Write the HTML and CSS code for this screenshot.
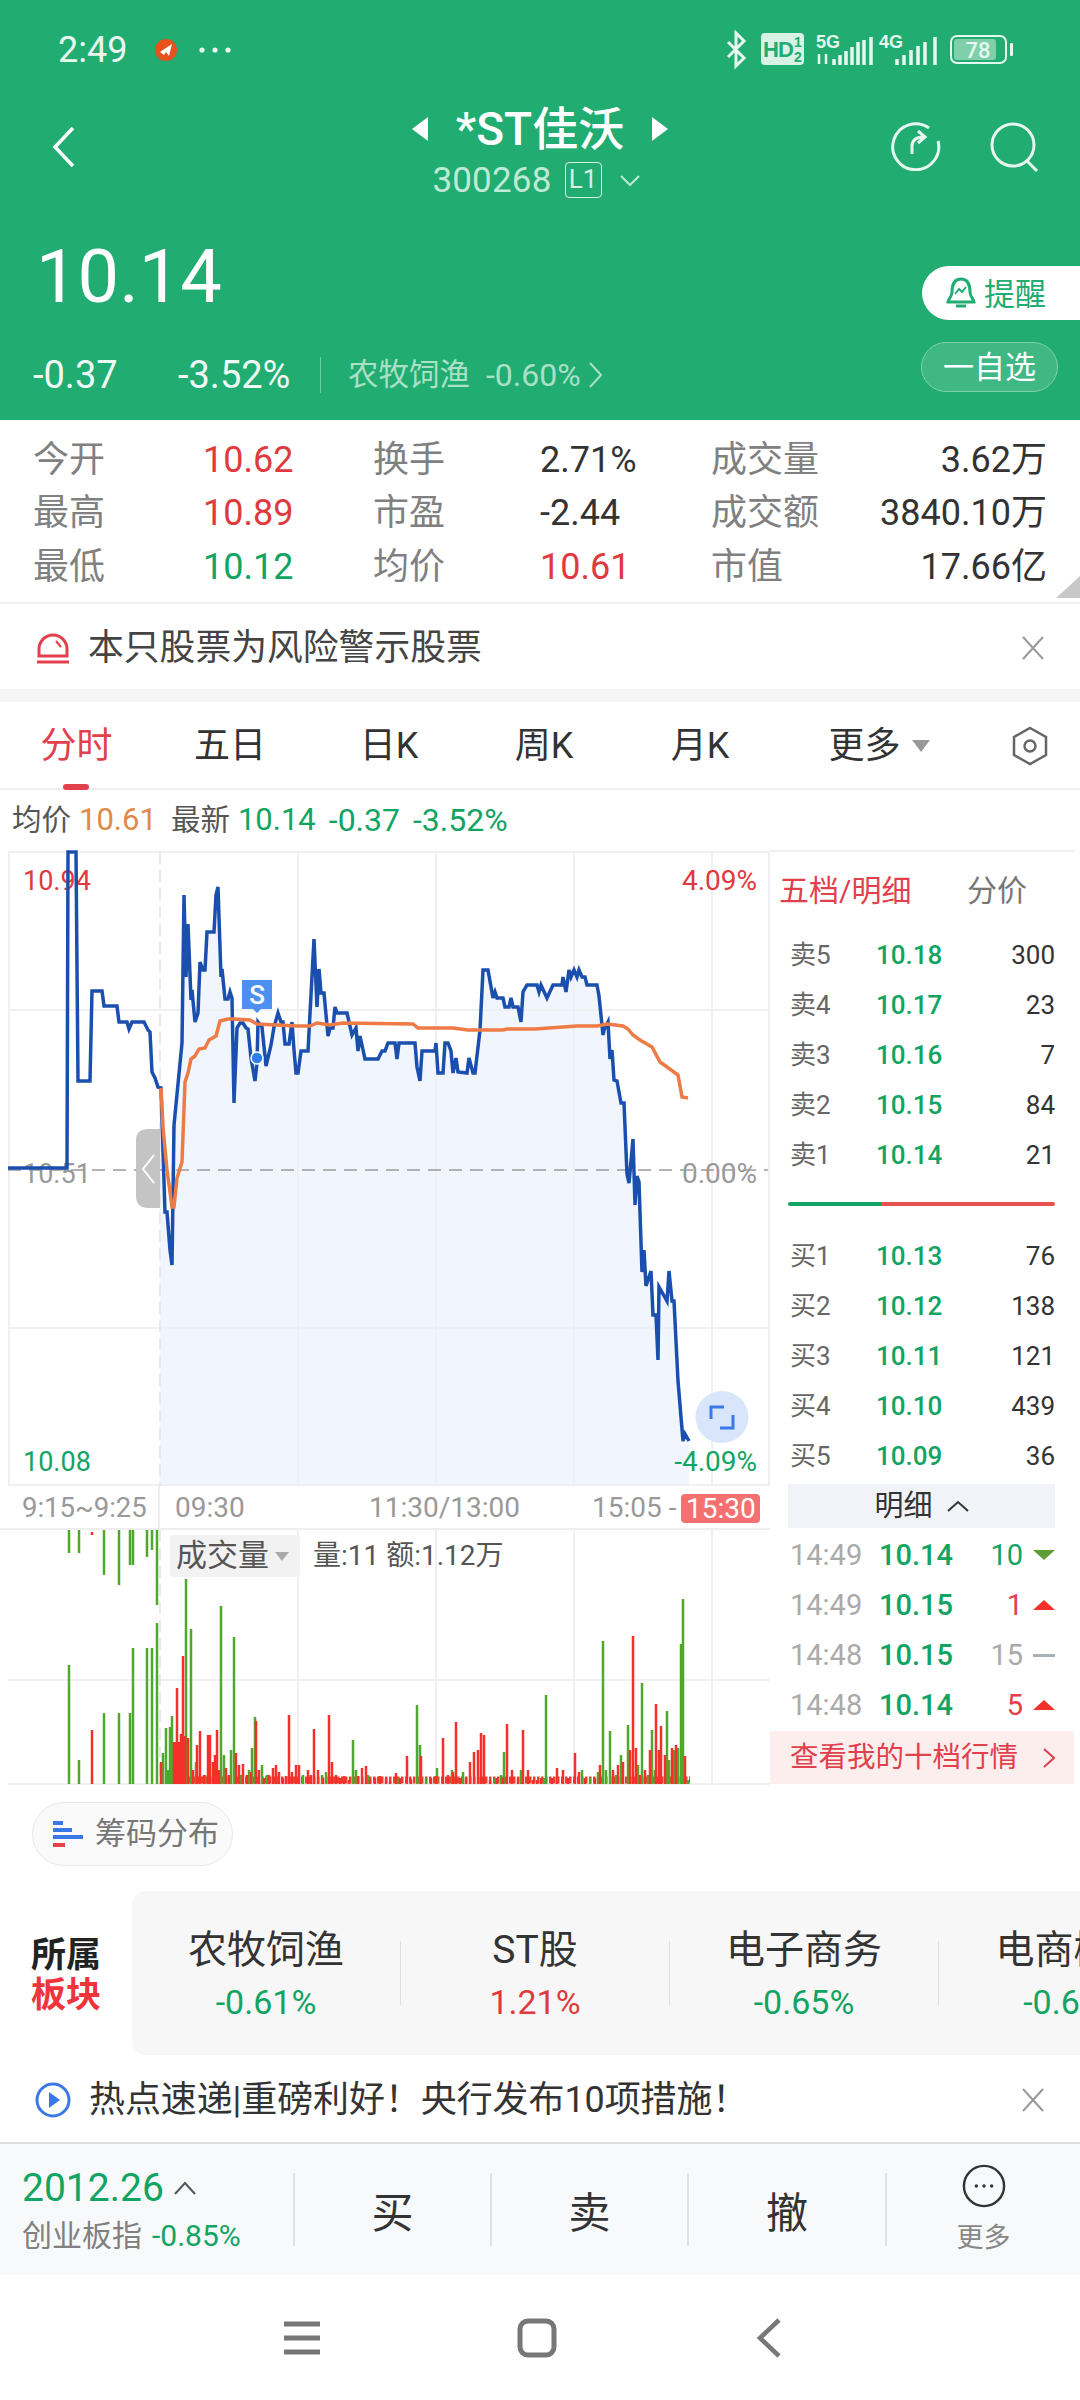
FILE: index.html
```html
<!DOCTYPE html>
<html lang="zh">
<head>
<meta charset="utf-8">
<title>*ST佳沃</title>
<link rel="stylesheet" href="styles.css">
</head>
<body>
<div class="page">

<!-- green top part -->
<header class="top">
  <div class="status">
    <span class="clock">2:49</span>
    <svg class="notif" viewBox="0 0 22 22"><circle cx="11" cy="11" r="11" fill="#e8501c"/><path d="M5 13 17 5 14 17 11 13 9 16z" fill="#fff"/></svg>
    <svg class="dots" width="32" height="6" viewBox="0 0 32 6"><circle cx="3" cy="3" r="2.6" fill="#e9f7f0"/><circle cx="16" cy="3" r="2.6" fill="#e9f7f0"/><circle cx="29" cy="3" r="2.6" fill="#e9f7f0"/></svg>
    <svg class="sysicons" viewBox="722 30 300 40">
      <path d="M728 42 744 58 736 66V33L744 41 728 57" fill="none" stroke="#e6f7ef" stroke-width="3"/>
      <rect x="761" y="33" width="43" height="32" rx="4" fill="#d8f3e6"/>
      <text x="763" y="57" class="sb-hd">HD</text>
      <text x="794" y="47" class="sb-mini">1</text>
      <text x="794" y="62" class="sb-mini">2</text>
      <text x="816" y="48" class="sb-net">5G</text>
      <path d="M819 54V64M826 54V64" stroke="#e6f7ef" stroke-width="2.5"/>
      <path d="M834 65V59M840 65V55M846 65V51M852 65V47M858 65V42M864 65V40M871 65V37" stroke="#e6f7ef" stroke-width="3.5"/>
      <text x="879" y="48" class="sb-net">4G</text>
      <path d="M897 65V59M904 65V55M911 65V50M918 65V46M925 65V42M935 65V37" stroke="#e6f7ef" stroke-width="3.5"/>
      <rect x="951" y="36" width="55" height="27" rx="6" fill="none" stroke="#e6f7ef" stroke-width="2"/>
      <rect x="954" y="39" width="42" height="21" rx="3" fill="#7fd0aa"/>
      <text x="978" y="58" class="sb-batt" text-anchor="middle">78</text>
      <rect x="1010" y="43" width="3" height="13" rx="1" fill="#e6f7ef"/>
    </svg>
  </div>

  <nav class="titlebar">
    <svg class="back" viewBox="0 0 24 42"><path d="M21 2 3 21 21 40" fill="none" stroke="#fff" stroke-width="3.5"/></svg>
    <div class="title-box">
      <div class="title-line">
        <span class="tri tri-left"></span>
        <span class="name">*ST佳沃</span>
        <span class="tri tri-right"></span>
      </div>
      <div class="code-line">
        <span class="code">300268</span>
        <span class="lv">L1</span>
        <svg class="code-arrow" viewBox="0 0 20 11"><path d="M1 1 10 10 19 1" fill="none" stroke="#bfead6" stroke-width="2"/></svg>
      </div>
    </div>
    <div class="nav-icons">
      <svg width="50" height="50" viewBox="0 0 50 50"><path d="M38 7A23 23 0 1 0 47 20" fill="none" stroke="#e6f7ef" stroke-width="3"/><path d="M21 33V24Q22 16 33 16M27 10 34 16 27 22" fill="none" stroke="#e6f7ef" stroke-width="3"/></svg>
      <svg width="52" height="52" viewBox="0 0 52 52"><circle cx="24" cy="24" r="21" fill="none" stroke="#e6f7ef" stroke-width="3"/><path d="M38 40 48 50" stroke="#e6f7ef" stroke-width="3"/></svg>
    </div>
  </nav>

  <div class="quote">
    <div class="quote-left">
      <div class="price">10.14</div>
      <div class="change">
        <span class="chg-a">-0.37</span>
        <span class="chg-b">-3.52%</span>
        <span class="chg-sep"></span>
        <span class="chg-sector">农牧饲渔</span>
        <span class="chg-sector-val">-0.60%</span>
        <svg class="chg-arrow" viewBox="0 0 13 26"><path d="M1 1 12 13 1 25" fill="none" stroke="#a9e0c6" stroke-width="2"/></svg>
      </div>
    </div>
    <div class="quote-right">
      <div class="remind">
        <svg width="30" height="32" viewBox="0 0 30 32"><path d="M15 2C7 2 6 9 6 15 6 20 2 22 2 25H28C28 22 24 20 24 15 24 9 23 2 15 2Z" fill="none" stroke="#21ac72" stroke-width="3"/><path d="M10 29H20" stroke="#21ac72" stroke-width="3"/><path d="M9 17 13 12 16 15 20 10" fill="none" stroke="#21ac72" stroke-width="2"/></svg>
        <span>提醒</span>
      </div>
      <div class="addfav">一自选</div>
    </div>
  </div>
</header>

<section class="stats">
  <span class="lb">今开</span><span class="up">10.62</span>
  <span class="lb">换手</span><span class="dk">2.71%</span>
  <span class="lb">成交量</span><span class="dk ra">3.62万</span>
  <span class="lb">最高</span><span class="up">10.89</span>
  <span class="lb">市盈</span><span class="dk">-2.44</span>
  <span class="lb">成交额</span><span class="dk ra">3840.10万</span>
  <span class="lb">最低</span><span class="down">10.12</span>
  <span class="lb">均价</span><span class="up">10.61</span>
  <span class="lb">市值</span><span class="dk ra">17.66亿</span>
  <i class="corner"></i>
</section>

<section class="notice">
  <svg class="notice-icon" width="34" height="32" viewBox="0 0 34 32"><path d="M3 24V17A14 14 0 0 1 31 17V24Z" fill="none" stroke="#e2404c" stroke-width="3"/><path d="M1 30H33" stroke="#e2404c" stroke-width="3"/><path d="M20 9 25 15" stroke="#e2404c" stroke-width="2"/></svg>
  <span class="notice-text">本只股票为风险警示股票</span>
  <svg class="close" width="24" height="24" viewBox="0 0 24 24"><path d="M2 1 22 23M22 1 2 23" stroke="#999" stroke-width="2"/></svg>
</section>

<div class="gap"></div>

<nav class="tabs">
  <span class="tab tab-on">分时</span>
  <span class="tab">五日</span>
  <span class="tab">日K</span>
  <span class="tab">周K</span>
  <span class="tab">月K</span>
  <span class="tab">更多<i class="tab-tri"></i></span>
  <svg class="tab-gear" width="38" height="40" viewBox="0 0 38 40"><path d="M19 2 35 11V29L19 38 3 29V11Z" fill="none" stroke="#666" stroke-width="2.5"/><circle cx="19" cy="20" r="5.5" fill="none" stroke="#666" stroke-width="2.5"/></svg>
</nav>

<div class="infoline">
  <span class="il-lb">均价</span><span class="il-org">10.61</span>
  <span class="il-lb il-new">最新</span><span class="il-grn">10.14</span>
  <span class="il-grn il-gap">-0.37</span>
  <span class="il-grn il-gap">-3.52%</span>
</div>

<section class="market">
  <div class="market-left">
    <svg class="chart" width="770" height="636" viewBox="0 850 770 636">
      <path class="area" d="M161 1088L165 1212 167 1212 170 1250 172 1265 174 1125 182 1043 184 895 186 977 188 924 191 1000 192 990 195 1022 198 1013 200 962 203 970 205 970 207 932 214 932 216 895 218 887 221 977 222 969 225 999 228 999 230 992 232 998 234 1103 237 1028 240 1023 243 1023 246 1028 248 1029 251 1058 255 1081 257 1063 258 1022 262 1027 266 1066 271 1045 274 1027 278 1013 281 1022 283 1022 285 1044 289 1044 292 1022 294 1050 296 1073 298 1073 301 1051 308 1051 314 939 317 1007 319 969 321 993 324 993 328 1036 330 1028 333 1028 335 1007 337 1013 347 1013 352 1035 356 1028 358 1051 360 1036 365 1059 378 1059 382 1051 385 1051 388 1043 395 1043 397 1059 399 1043 415 1043 417 1067 420 1081 422 1051 435 1051 436 1043 438 1073 443 1073 445 1043 448 1043 451 1051 453 1073 456 1058 458 1072 467 1073 469 1058 473 1073 475 1073 480 1030 483 970 488 970 493 998 495 992 497 998 503 998 505 1007 509 1007 511 998 513 1007 518 1007 521 1022 523 992 527 985 537 985 539 992 541 985 547 998 553 985 562 985 563 977 566 992 569 970 571 977 574 970 577 977 579 970 582 977 585 977 587 985 597 985 599 996 603 1035 604 1030 608 1022 610 1059 612 1050 614 1080 617 1081 621 1103 624 1103 627 1174 629 1183 633 1139 635 1205 637 1176 639 1182 642 1272 644 1250 646 1286 651 1271 653 1315 656 1315 658 1360 659 1287 667 1301 669 1271 672 1301 674 1301 678 1381 683 1441 685 1434 689 1441V1486H160V1088Z"/>
      <path class="grid" d="M8 852H770M8 1010H770M8 1328H770M8 1485H770M9 852V1486M769 852V1486M298 852V1486M436 852V1486M574 852V1486M712 852V1486"/>
      <path class="grid-dash" d="M160 852V1486"/>
      <text x="23" y="890" class="ch-lab ch-up">10.94</text>
      <text x="757" y="890" class="ch-pct ch-up" text-anchor="end">4.09%</text>
      <text x="23" y="1183" class="ch-lab ch-mid">10.51</text>
      <text x="757" y="1183" class="ch-pct ch-mid" text-anchor="end">0.00%</text>
      <text x="23" y="1471" class="ch-lab ch-dn">10.08</text>
      <text x="757" y="1471" class="ch-pct ch-dn" text-anchor="end">-4.09%</text>
      <path class="zero" d="M8 1170H768"/>
      <path class="handle" d="M148 1129H160V1208H148Q136 1208 136 1196V1141Q136 1129 148 1129Z"/>
      <path d="M154 1155 143 1169 154 1183" fill="none" stroke="#fff" stroke-width="2"/>
      <path class="price-line" d="M8 1168H67L68 852H76L78 1081H90L92 991H102L104 1006H117L119 1022H127L129 1029 132 1022H144L148 1030 150 1032 152 1072 155 1078 158 1087 161 1088 165 1212 167 1212 170 1250 172 1265 174 1125 182 1043 184 895 186 977 188 924 191 1000 192 990 195 1022 198 1013 200 962 203 970 205 970 207 932 214 932 216 895 218 887 221 977 222 969 225 999 228 999 230 992 232 998 234 1103 237 1028 240 1023 243 1023 246 1028 248 1029 251 1058 255 1081 257 1063 258 1022 262 1027 266 1066 271 1045 274 1027 278 1013 281 1022 283 1022 285 1044 289 1044 292 1022 294 1050 296 1073 298 1073 301 1051 308 1051 314 939 317 1007 319 969 321 993 324 993 328 1036 330 1028 333 1028 335 1007 337 1013 347 1013 352 1035 356 1028 358 1051 360 1036 365 1059 378 1059 382 1051 385 1051 388 1043 395 1043 397 1059 399 1043 415 1043 417 1067 420 1081 422 1051 435 1051 436 1043 438 1073 443 1073 445 1043 448 1043 451 1051 453 1073 456 1058 458 1072 467 1073 469 1058 473 1073 475 1073 480 1030 483 970 488 970 493 998 495 992 497 998 503 998 505 1007 509 1007 511 998 513 1007 518 1007 521 1022 523 992 527 985 537 985 539 992 541 985 547 998 553 985 562 985 563 977 566 992 569 970 571 977 574 970 577 977 579 970 582 977 585 977 587 985 597 985 599 996 603 1035 604 1030 608 1022 610 1059 612 1050 614 1080 617 1081 621 1103 624 1103 627 1174 629 1183 633 1139 635 1205 637 1176 639 1182 642 1272 644 1250 646 1286 651 1271 653 1315 656 1315 658 1360 659 1287 667 1301 669 1271 672 1301 674 1301 678 1381 683 1441 685 1434 689 1441"/>
      <path class="avg-line" d="M161 1088 163 1127 167 1170 172 1207 174 1207 177 1178 182 1162 185 1082 188 1073 191 1059 195 1056 199 1049 205 1048 209 1040 216 1036 220 1021 228 1019 233 1019 250 1020 257 1024 297 1026 310 1026 317 1023 330 1025 343 1023 413 1024 418 1028 453 1028 468 1030 503 1030 507 1029 535 1029 563 1027 577 1026 597 1026 607 1024 623 1026 628 1029 633 1035 640 1040 652 1047 660 1062 667 1067 678 1075 682 1097 688 1098"/>
      <path class="s-tag" d="M242 980H272V1009H261L257 1013 253 1009H242Z"/>
      <text x="257" y="1004" class="s-letter" text-anchor="middle">S</text>
      <circle cx="257" cy="1058" r="6" fill="#2f7fe8" stroke="#fff" stroke-width="1.5"/>
      <ellipse cx="722" cy="1417" rx="26.5" ry="26" fill="#d9e5fa"/>
      <path d="M711 1419V1407H724M733 1415V1428H720" fill="none" stroke="#3b78e7" stroke-width="3"/>
    </svg>

    <div class="axis">
      <span class="ax ax-pre">9:15~9:25</span>
      <span class="ax ax-open">09:30</span>
      <span class="ax">11:30/13:00</span>
      <span class="ax ax-end">15:05 -<b class="ax-now">15:30</b></span>
    </div>

    <div class="volume">
      <svg class="vol-svg" width="770" height="255" viewBox="0 1530 770 255">
        <path class="grid" d="M8 1680H770M8 1784H770M298 1530V1784M436 1530V1784M574 1530V1784M712 1530V1784"/>
        <path class="grid-dash" d="M160 1530V1784"/>
        <path class="v-base" d="M161 1780H690"/>
        <path class="v-g" d="M69 1530V1553M79 1530V1553M104 1530V1575M119 1530V1585M130 1530V1565M133 1530V1565M147 1530V1557M152 1530V1550M157 1530V1605M69 1665V1784M79 1760V1784M104 1713V1784M119 1713V1784M130 1713V1784M133 1648V1784M147 1648V1784M152 1648V1784M157 1623V1784M163 1753V1784M166 1728V1784M168 1770V1784M170 1727V1784M172 1716V1784M186 1579V1784M191 1629V1784M196 1762V1784M205 1775V1784M221 1606V1784M224 1755V1784M231 1750V1784M234 1637V1784M241 1775V1784M249 1770V1784M252 1748V1784M255 1717V1784M262 1765V1784M267 1775V1784M277 1778V1784M303 1775V1784M322 1775V1784M326 1772V1784M353 1740V1784M356 1770V1784M368 1775V1784M398 1778V1784M417 1705V1784M420 1745V1784M426 1778V1784M437 1768V1784M452 1770V1784M463 1772V1784M495 1778V1784M501 1775V1784M504 1752V1784M521 1770V1784M544 1778V1784M546 1695V1784M582 1770V1784M590 1778V1784M598 1772V1784M603 1641V1784M606 1770V1784M610 1731V1784M616 1775V1784M621 1755V1784M628 1725V1784M638 1765V1784M642 1683V1784M648 1775V1784M652 1730V1784M655 1770V1784M667 1711V1784M669 1760V1784M674 1750V1784M678 1748V1784M681 1644V1784M683 1599V1784M688 1780V1784"/>
        <path class="v-r" d="M92 1532V1535M92 1730V1784M161 1762V1784M174 1742V1784M176 1742V1784M177 1688V1784M179 1742V1784M181 1734V1784M183 1656V1784M185 1736V1784M188 1738V1784M193 1770V1784M197 1745V1784M200 1731V1784M204 1775V1784M208 1735V1784M210 1735V1784M213 1762V1784M215 1755V1784M217 1730V1784M219 1770V1784M226 1768V1784M229 1775V1784M236 1753V1784M239 1765V1784M243 1764V1784M247 1775V1784M251 1772V1784M256 1721V1784M259 1770V1784M264 1778V1784M269 1775V1784M273 1768V1784M276 1765V1784M279 1772V1784M283 1778V1784M286 1776V1784M289 1715V1784M292 1772V1784M296 1765V1784M299 1765V1784M308 1770V1784M311 1775V1784M314 1729V1784M318 1770V1784M323 1778V1784M329 1715V1784M332 1762V1784M336 1775V1784M340 1778V1784M344 1776V1784M349 1780V1784M358 1776V1784M362 1768V1784M366 1766V1784M370 1780V1784M375 1778V1784M380 1776V1784M386 1778V1784M390 1781V1784M396 1773V1784M400 1778V1784M407 1756V1784M411 1779V1784M421 1756V1784M431 1778V1784M436 1776V1784M443 1738V1784M448 1775V1784M453 1772V1784M456 1722V1784M460 1778V1784M466 1778V1784M470 1762V1784M474 1752V1784M478 1750V1784M481 1733V1784M484 1735V1784M490 1780V1784M497 1778V1784M503 1778V1784M507 1724V1784M512 1770V1784M518 1778V1784M523 1730V1784M528 1770V1784M533 1780V1784M537 1780V1784M541 1778V1784M552 1778V1784M557 1768V1784M563 1770V1784M568 1778V1784M575 1753V1784M579 1772V1784M585 1778V1784M595 1778V1784M600 1765V1784M613 1770V1784M618 1765V1784M623 1762V1784M630 1750V1784M633 1636V1784M636 1748V1784M640 1775V1784M645 1770V1784M650 1750V1784M656 1704V1784M659 1750V1784M661 1726V1784M665 1755V1784M672 1748V1784M676 1745V1784M685 1756V1784"/>
      </svg>
      <div class="vol-head">
        <span class="vol-pick">成交量<i class="vol-tri"></i></span>
        <span class="vol-info">量:11 额:1.12万</span>
      </div>
    </div>
  </div>

  <div class="market-right">
    <div class="bk-head"><span class="bk-on">五档/明细</span><span class="bk-off">分价</span></div>
    <div class="bk-row"><span>卖5</span><em>10.18</em><b>300</b></div>
    <div class="bk-row"><span>卖4</span><em>10.17</em><b>23</b></div>
    <div class="bk-row"><span>卖3</span><em>10.16</em><b>7</b></div>
    <div class="bk-row"><span>卖2</span><em>10.15</em><b>84</b></div>
    <div class="bk-row"><span>卖1</span><em>10.14</em><b>21</b></div>
    <div class="bk-split"><div class="bk-bar"></div></div>
    <div class="bk-row"><span>买1</span><em>10.13</em><b>76</b></div>
    <div class="bk-row"><span>买2</span><em>10.12</em><b>138</b></div>
    <div class="bk-row"><span>买3</span><em>10.11</em><b>121</b></div>
    <div class="bk-row"><span>买4</span><em>10.10</em><b>439</b></div>
    <div class="bk-row"><span>买5</span><em>10.09</em><b>36</b></div>
    <div class="bk-detail">明细<svg width="22" height="12" viewBox="0 0 22 12"><path d="M1 11 11 2 21 11" fill="none" stroke="#333" stroke-width="2"/></svg></div>
    <div class="tk-list">
      <div class="tk-row"><span>14:49</span><em>10.14</em><b class="tk-g">10</b><i class="tk-mark mk-down"></i></div>
      <div class="tk-row"><span>14:49</span><em>10.15</em><b class="tk-r">1</b><i class="tk-mark mk-up"></i></div>
      <div class="tk-row"><span>14:48</span><em>10.15</em><b class="tk-n">15</b><i class="tk-mark mk-flat"></i></div>
      <div class="tk-row"><span>14:48</span><em>10.14</em><b class="tk-r">5</b><i class="tk-mark mk-up"></i></div>
    </div>
    <div class="my-ten">
      <span>查看我的十档行情</span>
      <svg width="12" height="20" viewBox="0 0 12 20"><path d="M1 1 11 10 1 19" fill="none" stroke="#e2404c" stroke-width="2"/></svg>
    </div>
  </div>
</section>

<div class="chip-row">
  <div class="chip">
    <svg width="32" height="28" viewBox="0 0 32 28"><path d="M1 3H11" stroke="#3b78e7" stroke-width="4"/><path d="M1 10H20" stroke="#3b78e7" stroke-width="4"/><path d="M1 17H31" stroke="#3b78e7" stroke-width="4"/><path d="M1 25H13" stroke="#e8404a" stroke-width="4"/></svg>
    <span>筹码分布</span>
  </div>
</div>

<section class="sectors">
  <div class="sec-title">所属<br><span>板块</span></div>
  <div class="sec-card">
    <div class="sec-item"><span class="sec-name">农牧饲渔</span><span class="sec-val down">-0.61%</span></div>
    <div class="sec-item"><span class="sec-name">ST股</span><span class="sec-val up">1.21%</span></div>
    <div class="sec-item"><span class="sec-name">电子商务</span><span class="sec-val down">-0.65%</span></div>
    <div class="sec-item sec-last"><span class="sec-name">电商概念</span><span class="sec-val down">-0.62%</span></div>
  </div>
</section>

<section class="news">
  <svg class="news-icon" width="36" height="36" viewBox="0 0 36 36"><circle cx="18" cy="18" r="16" fill="none" stroke="#3b78e7" stroke-width="3"/><path d="M14 10 25 18 14 26Z" fill="#3b78e7"/></svg>
  <span class="news-text">热点速递|重磅利好！央行发布10项措施！</span>
  <svg class="close" width="24" height="24" viewBox="0 0 24 24"><path d="M2 1 22 23M22 1 2 23" stroke="#999" stroke-width="2"/></svg>
</section>

<footer class="trade">
  <div class="idx">
    <div class="idx-top"><span class="idx-val">2012.26</span><svg width="22" height="14" viewBox="0 0 22 14"><path d="M1 13 11 2 21 13" fill="none" stroke="#555" stroke-width="2"/></svg></div>
    <div class="idx-bot"><span class="idx-name">创业板指</span><span class="idx-chg">-0.85%</span></div>
  </div>
  <div class="act">买</div>
  <div class="act">卖</div>
  <div class="act">撤</div>
  <div class="act act-more">
    <svg width="44" height="44" viewBox="0 0 46 46"><circle cx="23" cy="23" r="21" fill="none" stroke="#333" stroke-width="2.5"/><circle cx="15" cy="23" r="1.8" fill="#333"/><circle cx="23" cy="23" r="1.8" fill="#333"/><circle cx="31" cy="23" r="1.8" fill="#333"/></svg>
    <span>更多</span>
  </div>
</footer>

<div class="sysnav">
  <svg width="38" height="36" viewBox="0 0 38 36"><path d="M1 4H37M1 18H37M1 32H37" stroke="#777" stroke-width="5"/></svg>
  <svg width="40" height="40" viewBox="0 0 40 40"><rect x="3" y="3" width="34" height="34" rx="8" fill="none" stroke="#777" stroke-width="5"/></svg>
  <svg width="26" height="40" viewBox="0 0 26 40"><path d="M23 2 4 20 23 38" fill="none" stroke="#777" stroke-width="4.5"/></svg>
</div>

</div>
</body>
</html>
```

FILE: styles.css
```css
/* quote page */
* {box-sizing: border-box;}
html, body {margin: 0; padding: 0; background: #fff;}
body {font-family: Roboto, "Noto Sans CJK SC", sans-serif; color: #333;}
i, em, b {font-style: normal;}
svg {display: block; flex: none;}
.page {width: 1080px; height: 2400px; overflow: hidden;}
.up {color: #e0393e;}
.down {color: #12a462;}

/* header */
.top {height: 420px; background: #21ac72; color: #fff;}
.status {height: 100px; display: flex; align-items: center; padding: 0 58px;}
.clock {font-size: 36px; color: #e9f7f0; width: 97px;}
.notif {width: 22px; height: 22px;}
.dots {margin-left: 22px;}
.sysicons {width: 300px; height: 40px; margin-left: auto;}
.sb-hd {font: 700 22px "Liberation Sans", sans-serif; fill: #21ac72; letter-spacing: -1px;}
.sb-mini {font: 700 14px "Liberation Sans", sans-serif; fill: #21ac72;}
.sb-net {font: 700 18px "Liberation Sans", sans-serif; fill: #e6f7ef;}
.sb-batt {font: 500 22px Roboto, sans-serif; fill: #e6f7ef;}

.titlebar {height: 105px; display: grid; grid-template-columns: 300px 1fr 300px; align-items: center; padding: 0;}
.back {width: 24px; height: 42px; margin: 0 0 11px 52px;}
.title-box {display: flex; flex-direction: column; align-items: center;}
.title-line {display: flex; align-items: center; height: 50px; margin-top: -2px;}
.name {font-size: 46px; font-weight: 500; color: #fff; line-height: 50px; margin: 0 28px;}
.tri {width: 0; height: 0; border-top: 12px solid transparent; border-bottom: 12px solid transparent;}
.tri-left {border-right: 16px solid #fff;}
.tri-right {border-left: 16px solid #fff;}
.code-line {display: flex; align-items: center; height: 38px; margin-top: 7px; margin-left: -8px;}
.code {font-size: 35px; color: #bfead6; letter-spacing: .2px;}
.lv {font-size: 26px; width: 37px; height: 36px; line-height: 33px; text-align: center; border: 1.5px solid #d5f1e4; border-radius: 4px; margin-left: 13px; color: #d5f1e4;}
.code-arrow {width: 20px; height: 11px; margin-left: 18px;}
.nav-icons {display: flex; justify-content: flex-end; gap: 48px; padding-right: 39px; margin-bottom: 11px;}

.quote {height: 215px; padding-top: 40px; display: flex; justify-content: space-between;}
.quote-left {padding-left: 33px;}
.price {font-size: 74px; line-height: 64px; height: 64px; margin-left: 3px; color: #fff;}
.change {display: flex; align-items: center; height: 40px; margin-top: 46px; font-size: 38px; line-height: 40px; color: #f0faf5;}
.chg-a {width: 145px;}
.chg-b {width: 142px;}
.chg-sep {width: 1px; height: 36px; background: #6ecb9f; margin-right: 27px;}
.chg-sector {font-size: 30.5px; color: #a9e0c6; width: 138px;}
.chg-sector-val {font-size: 32px; color: #a9e0c6;}
.chg-arrow {width: 13px; height: 26px; margin-left: 8px;}
.quote-right {display: flex; flex-direction: column; align-items: flex-end; margin-top: 21px;}
.remind {width: 158px; height: 54px; background: #fff; border-radius: 27px 0 0 27px; display: flex; align-items: center; padding-left: 24px; gap: 8px; color: #21ac72; font-size: 31px; line-height: 40px;}
.remind span {margin-top: 4px;}
.addfav {width: 137px; height: 50px; margin-top: 22px; margin-right: 22px; line-height: 49px; text-align: center; font-size: 31px; border: 1.5px solid #7fd0aa; border-radius: 25px; background: #3fb884; color: #fff;}

/* stats table */
.stats {position: relative; height: 184px; padding: 13px 33px 0; display: grid; grid-template-columns: 170px 170px 167px 171px 110px 1fr; grid-auto-rows: 53.5px; align-items: center; font-size: 36px; line-height: 44px; border-bottom: 2px solid #eee;}
.lb {color: #808080;}
.dk {color: #333;}
.ra {text-align: right;}
.corner {position: absolute; right: 0; bottom: 4px; width: 0; height: 0; border-left: 24px solid transparent; border-bottom: 22px solid #c8c8c8;}

.notice {height: 85px; display: flex; align-items: center; padding: 2px 35px 0 36px;}
.notice-text {font-size: 35.8px; line-height: 44px; color: #444; margin-left: 18px;}
.close {margin-left: auto;}
.gap {height: 13px; background: #f5f5f5;}

/* tabs */
.tabs {height: 88px; display: grid; grid-template-columns: 153px 154px 164px 146px 166px 192px 1fr; align-items: center; justify-items: center; border-bottom: 2px solid #eee;}
.tab {position: relative; font-size: 36px; color: #333; line-height: 88px; display: flex; align-items: center;}
.tab-on {color: #e2404c;}
.tab-on::after {content: ""; position: absolute; left: 23px; bottom: 0; width: 26px; height: 6px; border-radius: 3px; background: #e2404c;}
.tab-tri {width: 0; height: 0; margin-left: 11px; border-left: 9px solid transparent; border-right: 9px solid transparent; border-top: 12px solid #999;}
.tab-gear {margin-left: 5px;}

.infoline {height: 60px; display: flex; align-items: center; padding-left: 12px; font-size: 31px; line-height: 40px;}
.il-lb {font-size: 29.5px; color: #555;}
.il-org {color: #e08a4a; margin-left: 8px;}
.il-new {margin-left: 14px;}
.il-grn {color: #12a462; margin-left: 8px;}
.il-gap {margin-left: 13px; font-size: 32px;}

/* chart + order book */
.market {display: flex; height: 936px;}
.market-left {width: 770px;}
.market-right {width: 304px; border-top: 2px solid #eee; display: flex; flex-direction: column;}
.chart {width: 770px; height: 636px;}
.area {fill: #f0f5fe;}
.grid {fill: none; stroke: #eef0f3; stroke-width: 2;}
.grid-dash {fill: none; stroke: #e8e8ee; stroke-width: 2; stroke-dasharray: 12 6;}
.zero {fill: none; stroke: #9a9a9a; stroke-width: 1.5; stroke-dasharray: 13 8;}
.handle {fill: #c4c4c4;}
.price-line {fill: none; stroke: #1b4fae; stroke-width: 3.5;}
.avg-line {fill: none; stroke: #ee7b45; stroke-width: 3.5;}
.s-tag {fill: #4d90f0;}
.s-letter {font: 500 26px Roboto, sans-serif; fill: #fff;}
.ch-lab {font: 27px Roboto, sans-serif;}
.ch-pct {font: 28px Roboto, sans-serif;}
.ch-up {fill: #e0393e;}
.ch-mid {fill: #999;}
.ch-dn {fill: #12a462;}

.axis {height: 44px; display: grid; grid-template-columns: 160px 209px 223px 1fr; align-items: center; font-size: 28px; line-height: 44px; color: #999; border-bottom: 2px solid #eee;}
.ax-pre {padding-left: 22px; border-right: 2px solid #eee; font-size: 27.5px;}
.ax-open {padding-left: 15px;}
.ax-end {display: flex; align-items: center;}
.ax-now {width: 79px; height: 29px; line-height: 29px; margin-left: 5px; text-align: center; font-weight: 400; color: #fff; background: #f57070; border-radius: 4px;}

.volume {position: relative; height: 256px;}
.vol-svg {width: 770px; height: 255px;}
.v-base {fill: none; stroke: #e8402e; stroke-width: 7; stroke-dasharray: 2.5 1.5;}
.v-g {fill: none; stroke: #4ea82e; stroke-width: 2.5;}
.v-r {fill: none; stroke: #f5302a; stroke-width: 2.5;}
.vol-head {position: absolute; left: 170px; top: 5px; display: flex; align-items: center;}
.vol-pick {width: 130px; height: 42px; padding-left: 6px; display: flex; align-items: center; background: #f2f2f2; border-radius: 4px; font-size: 31px; line-height: 40px; color: #555;}
.vol-tri {width: 0; height: 0; margin-left: 6px; border-left: 7px solid transparent; border-right: 7px solid transparent; border-top: 9px solid #aaa;}
.vol-info {font-size: 28px; line-height: 40px; color: #555; margin-left: 13px;}

.bk-head {height: 78px; display: flex; align-items: center; padding-left: 9px; font-size: 30px; line-height: 40px;}
.bk-on {color: #e2404c; width: 188px;}
.bk-off {color: #777;}
.bk-row {height: 50px; display: grid; grid-template-columns: 86px 1fr auto; align-items: center; padding: 0 19px 0 20px; font-size: 26px; line-height: 36px;}
.bk-row span {color: #666;}
.bk-row em {color: #12a462; font-weight: 500;}
.bk-row b {color: #333; font-weight: 400;}
.bk-split {height: 51px; padding: 22px 19px 0 18px;}
.bk-bar {height: 4px; border-radius: 2px; background: linear-gradient(to right, #12a462 35%, #e85050 35%);}
.bk-detail {height: 44px; margin: 3px 19px 0 18px; display: flex; align-items: center; justify-content: center; gap: 14px; background: #f2f3f8; font-size: 29px; line-height: 40px; color: #333;}
.tk-list {padding-top: 2px;}
.tk-row {height: 50px; display: grid; grid-template-columns: 89px 1fr auto 32px; align-items: center; padding: 0 19px 0 20px; font-size: 29px; line-height: 40px;}
.tk-row span {color: #aaa;}
.tk-row em {color: #12a462; font-weight: 500;}
.tk-row b {font-weight: 400; text-align: right;}
.tk-g {color: #12a462;}
.tk-r {color: #e2404c;}
.tk-n {color: #aaa;}
.tk-mark {justify-self: end; width: 0; height: 0; border-left: 11px solid transparent; border-right: 11px solid transparent;}
.mk-down {border-top: 10px solid #5d9e36;}
.mk-up {border-bottom: 10px solid #f5302a;}
.mk-flat {width: 22px; height: 3px; border: 0; background: #aab0b8;}
.my-ten {height: 53px; margin-top: 1px; display: flex; align-items: center; justify-content: space-between; padding: 0 19px 0 20px; background: #fdeeee; color: #e2404c; font-size: 28.5px; line-height: 40px;}

/* lower part */
.chip-row {height: 105px; padding: 16px 0 0 32px;}
.chip {width: 201px; height: 64px; border: 1.5px solid #e8e8e8; border-radius: 32px; background: #fafafa; display: flex; align-items: center; padding-left: 19px; gap: 11px; font-size: 31px; line-height: 40px; color: #777;}
.sectors {height: 164px; display: flex; align-items: center;}
.sec-title {width: 132px; padding: 6px 0 0 31px; font-size: 35px; font-weight: 700; line-height: 40px; color: #222;}
.sec-title span {color: #f0343c;}
.sec-card {flex: 1; height: 164px; background: #f7f7f7; border-radius: 14px 0 0 14px; display: flex; align-items: center; overflow: hidden;}
.sec-item {flex: 0 0 269px; height: 64px; border-right: 1.5px solid #ddd; display: flex; flex-direction: column; align-items: center; justify-content: space-between;}
.sec-last {border-right: 0;}
.sec-name {font-size: 39px; line-height: 46px; color: #333; margin-top: -14px; white-space: nowrap;}
.sec-val {font-size: 34px; line-height: 38px; margin-bottom: -16px;}
.news {height: 89px; display: flex; align-items: center; padding: 2px 35px 0; border-bottom: 2px solid #ddd;}
.news-text {font-size: 36px; line-height: 44px; color: #333; margin-left: 18px; letter-spacing: -.1px;}
.trade {height: 131px; background: #f8f9fb; display: grid; grid-template-columns: 293px 197px 197px 198px 1fr; align-items: center;}
.idx {padding-left: 22px;}
.idx-top {display: flex; align-items: center; gap: 10px; height: 50px;}
.idx-val {font-size: 39px; color: #12a462;}
.idx-bot {display: flex; align-items: center; margin-top: 3px; line-height: 40px;}
.idx-name {font-size: 30px; color: #808080;}
.idx-chg {font-size: 30px; color: #12a462; margin-left: 10px;}
.act {height: 73px; border-left: 2px solid #dfe1e6; display: flex; align-items: center; justify-content: center; font-size: 42px; color: #333;}
.act-more {flex-direction: column; gap: 12px; font-size: 27px; line-height: 36px; color: #888;}
.sysnav {height: 125px; display: grid; grid-template-columns: 283px 274px 200px auto; align-items: center;}
.sysnav svg:nth-child(1) {grid-column: 1; justify-self: end; margin-right: -38px;}
.sysnav svg:nth-child(2) {grid-column: 2; justify-self: end;}
.sysnav svg:nth-child(3) {grid-column: 3; justify-self: end; margin-right: -25px;}
```
